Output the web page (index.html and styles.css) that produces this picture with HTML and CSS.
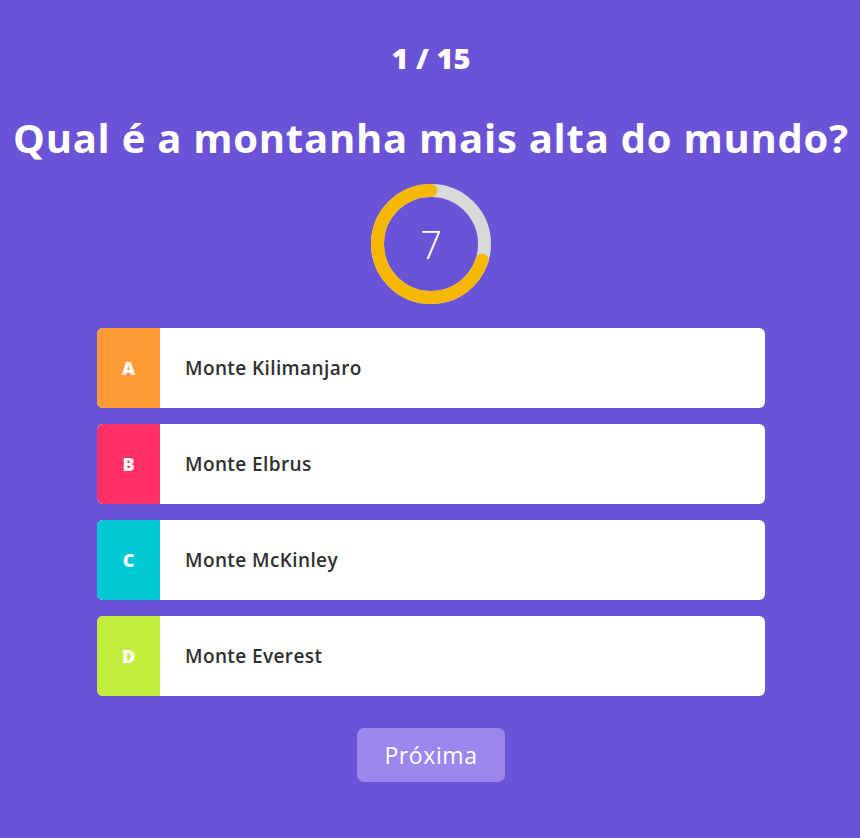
FILE: index.html
```html
<!DOCTYPE html>
<html lang="pt">
<head>
<meta charset="utf-8">
<title>Quiz</title>
<link rel="stylesheet" href="styles.css">
</head>
<body>
<main class="quiz">
  <div class="counter">1 / 15</div>
  <h1 class="question">Qual é a montanha mais alta do mundo?</h1>
  <div class="timer">
    <svg class="timer-ring" width="120" height="120" viewBox="0 0 120 120">
      <circle cx="60" cy="60" r="53.5" fill="none" stroke="#d9d9d9" stroke-width="13"/>
      <circle cx="60" cy="60" r="53.5" fill="none" stroke="#f5b700" stroke-width="13" stroke-linecap="round" stroke-dasharray="235.3 400" transform="rotate(-90 60 60) translate(0 120) scale(1 -1)"/>
    </svg>
    <span class="timer-value">7</span>
  </div>
  <ul class="options">
    <li class="option"><span class="letter letter-a">A</span><span class="text">Monte Kilimanjaro</span></li>
    <li class="option"><span class="letter letter-b">B</span><span class="text">Monte Elbrus</span></li>
    <li class="option"><span class="letter letter-c">C</span><span class="text">Monte McKinley</span></li>
    <li class="option"><span class="letter letter-d">D</span><span class="text">Monte Everest</span></li>
  </ul>
  <button class="next">Próxima</button>
</main>
</body>
</html>
```
FILE: styles.css
```css
html, body {
  margin: 0;
  padding: 0;
}
body {
  background: #6a53d6;
  font-family: "Open Sans", "DejaVu Sans", sans-serif;
  color: #fff;
  min-height: 838px;
}
.quiz {
  display: flex;
  flex-direction: column;
  align-items: center;
  padding-left: 2px;
}
.counter {
  margin-top: 40px;
  font-size: 29px;
  line-height: 36px;
  font-weight: 800;
}
.question {
  margin: 38px 0 0;
  font-size: 40px;
  line-height: 48px;
  font-weight: 700;
  letter-spacing: 0.75px;
  white-space: nowrap;
}
.timer {
  margin-top: 22px;
  width: 120px;
  height: 120px;
  position: relative;
  display: flex;
  align-items: center;
  justify-content: center;
}
.timer-ring {
  position: absolute;
  left: 0;
  top: 0;
}
.timer-value {
  position: relative;
  font-size: 38px;
  font-weight: 300;
  line-height: 1;
}
.options {
  list-style: none;
  margin: 24px 0 0;
  padding: 0;
  width: 668px;
  display: flex;
  flex-direction: column;
  gap: 16px;
}
.option {
  height: 80px;
  background: #fff;
  border-radius: 6px;
  overflow: hidden;
  display: flex;
  align-items: center;
}
.letter {
  width: 63px;
  height: 100%;
  display: flex;
  align-items: center;
  justify-content: center;
  font-size: 18px;
  font-weight: 800;
  color: #fff;
}
.letter-a { background: #ff9a36; }
.letter-b { background: #ff2f68; }
.letter-c { background: #00c9d4; }
.letter-d { background: #c3ef3c; }
.text {
  padding-left: 25px;
  font-size: 19px;
  font-weight: 600;
  letter-spacing: 0.4px;
  color: #2f2f2f;
}
.next {
  margin-top: 32px;
  width: 148px;
  height: 54px;
  border: none;
  border-radius: 7px;
  background: #9b86ee;
  color: #fff;
  font-family: inherit;
  font-size: 23px;
  font-weight: 500;
  letter-spacing: 0.6px;
}
```
